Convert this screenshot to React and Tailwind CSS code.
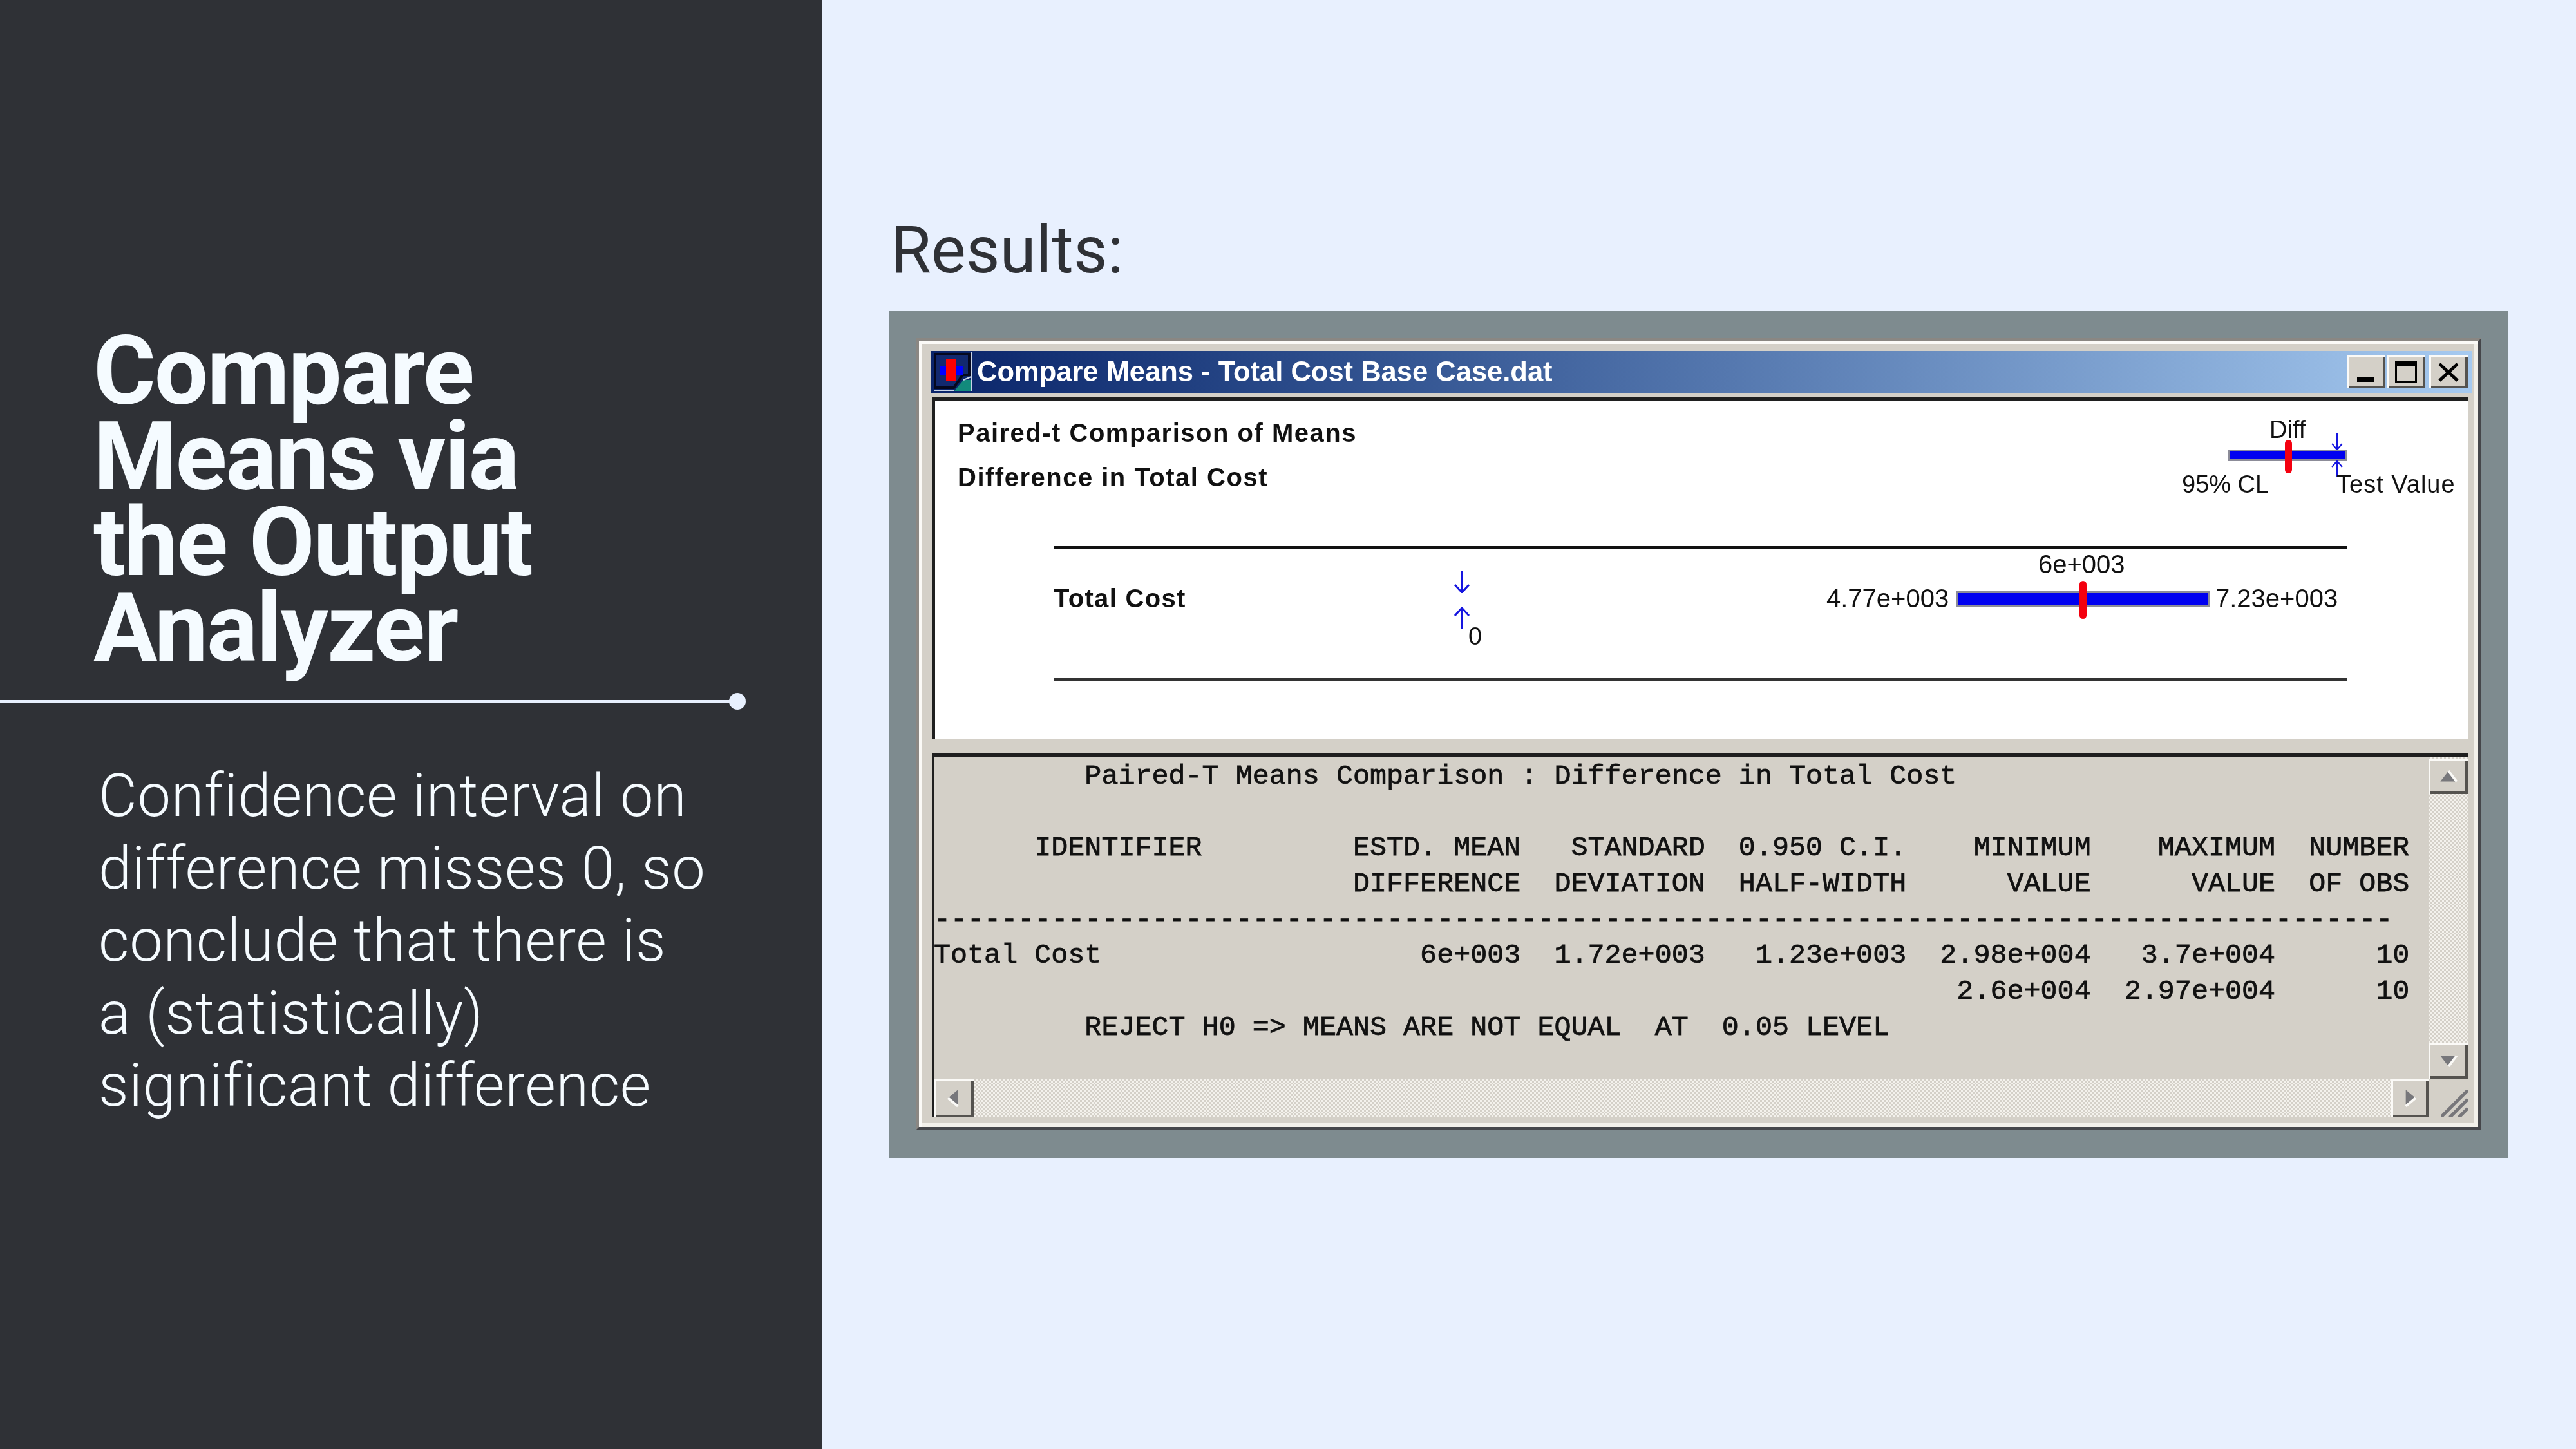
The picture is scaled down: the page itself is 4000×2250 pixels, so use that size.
import React from 'react';

const heading = ['Compare', 'Means via', 'the Output', 'Analyzer'];
const body = [
  'Confidence interval on',
  'difference misses 0, so',
  'conclude that there is',
  'a (statistically)',
  'significant difference',
];

const report = [
  '         Paired-T Means Comparison : Difference in Total Cost',
  '',
  '      IDENTIFIER         ESTD. MEAN   STANDARD  0.950 C.I.    MINIMUM    MAXIMUM  NUMBER',
  '                         DIFFERENCE  DEVIATION  HALF-WIDTH      VALUE      VALUE  OF OBS',
  '---------------------------------------------------------------------------------------',
  'Total Cost                   6e+003  1.72e+003   1.23e+003  2.98e+004   3.7e+004      10',
  '                                                             2.6e+004  2.97e+004      10',
  '         REJECT H0 => MEANS ARE NOT EQUAL  AT  0.05 LEVEL',
];

const raised = 'bg-[#d4d0c8] shadow-[inset_3px_3px_0_#fbfaf7,inset_-4px_-4px_0_#55534f]';
const dither = 'bg-[repeating-conic-gradient(#f4f2ed_0_25%,#d4d0c8_0_50%)] bg-[length:6px_6px]';

function AppIcon() {
  return (
    <svg viewBox="0 0 60 61" className="w-[60px] h-[61px] shrink-0">
      <rect width="60" height="61" fill="#0a246a" />
      <path d="M2 3h53v32l-10 0-14 20H2z" fill="#12296f" stroke="#05081f" strokeWidth="4" />
      <rect x="10" y="21" width="35" height="15" fill="#0000ff" />
      <rect x="19" y="10" width="15" height="34" fill="#ff0000" />
      <path d="M32 60l14-17h12v17z" fill="#128a7c" />
      <path d="M0 59h32M58 0v60M46 43l12-5" stroke="#c9d4e8" strokeWidth="2" fill="none" />
    </svg>
  );
}

function CaptionButton({ children, className }) {
  return (
    <div className={`w-[60px] h-[51px] flex items-center justify-center ${raised} ${className}`}>
      {children}
    </div>
  );
}

function ArrowGlyph({ dir, className }) {
  const path = dir === 'down' ? 'M14 0V33M3 21l11 12 11-12' : 'M14 34V1M3 13L14 1l11 12';
  return (
    <svg viewBox="0 0 28 34" preserveAspectRatio="none" className={className}>
      <path d={path} fill="none" stroke="#1616e0" strokeWidth="3" />
    </svg>
  );
}

function Interval({ className }) {
  return <div className={`bg-[#0000f0] border-[3px] border-[#8c8c98] ${className}`} />;
}

function ScrollButton({ points, highlight, className }) {
  return (
    <div className={`flex items-center justify-center ${raised} ${className}`}>
      <svg viewBox="0 0 30 30" className="w-[38px] h-[38px]">
        <polygon points={points} fill="#77777b" />
        <path d={highlight} stroke="#fbfaf7" strokeWidth="3" fill="none" />
      </svg>
    </div>
  );
}

function ResultsWindow() {
  return (
    <div className="blur-[0.7px] h-[1230px] flex flex-col pl-[18px] pr-[10px] pt-[15px] pb-[15px] bg-[#d4d0c8] border-[5px] border-t-[#8a8783] border-l-[#8a8783] border-r-[#45464a] border-b-[#45464a] shadow-[inset_4px_4px_0_#fbfaf7,inset_-6px_-6px_0_#f2f0ea]">
      {/* Title bar */}
      <div className="h-[65px] shrink-0 flex items-center pl-[5px] pr-[6px] bg-gradient-to-r from-[#0a246a] to-[#a6caf0]">
        <AppIcon />
        <span className="ml-[7px] text-white font-bold text-[43.5px] leading-none [font-family:'Liberation_Sans',sans-serif] whitespace-nowrap">
          Compare Means - Total Cost Base Case.dat
        </span>
        <div className="ml-auto flex items-center">
          <CaptionButton>
            <div className="w-[26px] h-[7px] bg-black mt-[24px] mr-[2px]" />
          </CaptionButton>
          <CaptionButton className="ml-[2px]">
            <div className="w-[34px] h-[34px] border-[3px] border-t-[7px] border-black" />
          </CaptionButton>
          <CaptionButton className="ml-[6px]">
            <svg viewBox="0 0 32 32" className="w-[32px] h-[32px]">
              <path d="M2 3l28 26M30 3L2 29" stroke="#000" strokeWidth="5" fill="none" />
            </svg>
          </CaptionButton>
        </div>
      </div>

      <div className="mt-[7px] mr-[6px] ml-[2px] flex-1 flex flex-col [font-family:'Liberation_Sans',sans-serif] text-[#111]">
        {/* Chart pane */}
        <div className="h-[531px] shrink-0 bg-white border-t-[6px] border-l-[5px] border-t-[#1f1f1f] border-l-[#1f1f1f] pt-[15px]">
          <div className="flex justify-between">
            <div className="ml-[35px] font-bold text-[40px] leading-[69px] tracking-[1.5px]">
              <div>Paired-t Comparison of Means</div>
              <div>Difference in Total Cost</div>
            </div>
            {/* Legend */}
            <div className="relative w-[440px] h-[138px] mr-[12px] text-[38px] leading-[40px]">
              <span className="absolute left-[144px] top-[9px]">Diff</span>
              <Interval className="absolute left-[80px] top-[60px] w-[185px] h-[18px]" />
              <div className="absolute left-[168px] top-[45px] w-[11px] h-[52px] rounded-full bg-[#f4000f]" />
              <ArrowGlyph dir="down" className="absolute left-[239px] top-[35px] w-[20px] h-[26px]" />
              <ArrowGlyph dir="up" className="absolute left-[239px] top-[77px] w-[20px] h-[26px]" />
              <span className="absolute left-[8px] top-[94px]">95% CL</span>
              <span className="absolute left-[248px] top-[94px] whitespace-nowrap tracking-[1px]">Test Value</span>
            </div>
          </div>

          {/* Chart row */}
          <div className="mt-[72px] ml-[184px] w-[2009px] h-[209px] border-y-4 border-t-[#111] border-b-[#333] flex items-start">
            <div className="mt-[57px] w-[624px] shrink-0 font-bold text-[40px] leading-[40px] tracking-[1.3px]">Total Cost</div>
            <div className="relative w-[60px] h-[160px] shrink-0 text-[38px] leading-[40px]">
              <ArrowGlyph dir="down" className="absolute left-[-4px] top-[35px] w-[28px] h-[34px]" />
              <ArrowGlyph dir="up" className="absolute left-[-4px] top-[91px] w-[28px] h-[34px]" />
              <span className="absolute left-[20px] top-[116px]">0</span>
            </div>
            <div className="relative ml-auto mr-[17px] w-[792px] h-[120px] text-[40px] leading-[40px]">
              <span className="absolute left-[329px] top-[4px]">6e+003</span>
              <span className="absolute left-0 top-[57px]">4.77e+003</span>
              <Interval className="absolute left-[201px] top-[66px] w-[395px] h-[25px]" />
              <div className="absolute left-[393px] top-[50px] w-[11px] h-[59px] rounded-full bg-[#f4000f]" />
              <span className="absolute left-[604px] top-[57px]">7.23e+003</span>
            </div>
          </div>
        </div>

        {/* Report pane */}
        <div className="mt-[22px] flex-1 flex flex-col bg-[#d4d0c8] border-t-[5px] border-l-[3px] border-t-[#1f1f1f] border-l-[#1f1f1f]">
          <div className="h-[500px] shrink-0 flex">
            <pre className="flex-1 pt-[3px] font-['Liberation_Mono',monospace] text-[43.4px] leading-[55.7px] text-[#111] [-webkit-text-stroke:0.8px_#111] overflow-hidden">
              {report.map((line, i) => (
                <div key={i} className="h-[55.7px]">{line}</div>
              ))}
            </pre>
            <div className={`w-[61px] shrink-0 flex flex-col ${dither}`}>
              <ScrollButton points="15,8 25,21 5,21" highlight="M15 8l10 13" className="h-[54px] mt-[4px] shrink-0" />
              <div className="flex-1" />
              <ScrollButton points="5,9 25,9 15,22" highlight="M25 9L15 22" className="h-[56px] shrink-0" />
            </div>
          </div>
          <div className="h-[60px] shrink-0 flex">
            <ScrollButton points="20,5 20,25 8,15" highlight="M20 25L8 15" className="w-[62px] shrink-0" />
            <div className={`flex-1 ${dither}`} />
            <ScrollButton points="10,5 10,25 22,15" highlight="M10 25l12-10" className="w-[58px] shrink-0" />
            <div className="w-[61px] shrink-0 flex items-end justify-end">
              <svg viewBox="0 0 42 42" className="w-[42px] h-[42px]">
                <path d="M0 42L42 0M14 42L42 14M28 42L42 28" stroke="#77767a" strokeWidth="5" fill="none" />
              </svg>
            </div>
          </div>
        </div>
      </div>
    </div>
  );
}

export default function App() {
  return (
    <div className="w-[4000px] h-[2250px] flex overflow-hidden bg-[#e8f0fe] [font-family:Roboto,sans-serif]">
      {/* Left title panel */}
      <aside className="w-[1276px] shrink-0 bg-[#2f3136] pt-[510px]">
        <h1 className="ml-[145px] text-[148px] leading-[133px] font-bold tracking-[-2px] text-[#f5fbff]">
          {heading.map((line) => <div key={line}>{line}</div>)}
        </h1>
        <div className="mt-[34px] flex items-center w-[1158px]">
          <div className="flex-1 h-[5px] bg-[#e8f0fe]" />
          <div className="w-[26px] h-[26px] rounded-full bg-[#e8f0fe] -ml-[2px]" />
        </div>
        <div className="mt-[78px] ml-[153px] text-[92px] leading-[112.5px] font-light tracking-[0.7px] text-[#f5fbff]">
          {body.map((line) => <div key={line}>{line}</div>)}
        </div>
      </aside>

      {/* Results */}
      <main className="flex-1 pl-[105px] pr-[106px] pt-[328px]">
        <div className="text-[102px] leading-[120px] text-[#2f3136] ml-[2px] mb-[35px]">Results:</div>
        <div className="h-[1315px] bg-[#7e8b8f] pt-[42px] px-[41px]">
          <ResultsWindow />
        </div>
      </main>
    </div>
  );
}
